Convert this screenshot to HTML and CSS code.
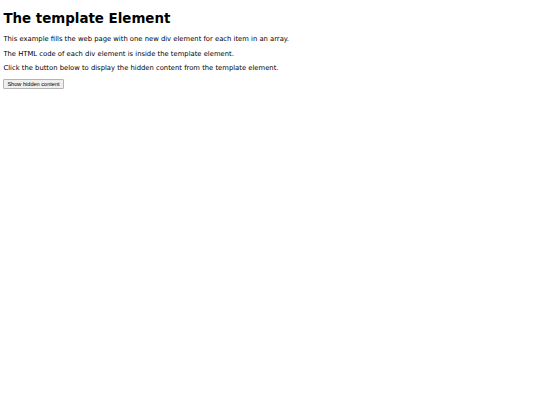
FILE: index.html
```html
<!DOCTYPE html>
<html lang="en">
<head>
    <meta charset="UTF-8">
    <meta name="viewport" content="width=device-width, initial-scale=1.0">
    <title>The template Element</title>
    <link rel="stylesheet" href="styles.css">
</head>
<body>

    <h1>The template Element</h1>

    <p>This example fills the web page with one new div element for each item in an array.</p>
    <p>The HTML code of each div element is inside the template element.</p>
    <p>Click the button below to display the hidden content from the template element.</p>

    <button onclick="showContent()">Show hidden content</button>

    <template>
        <div class="myClass">I like: </div>
    </template>

    <script>
        let myArr = ["Audi", "BMW", "Ford", "Honda", "Jaguar", "Nissan"];
        function showContent() {
            let temp, item, a, i;
            temp = document.getElementsByTagName("template")[0];
            item = temp.content.querySelector("div");
            for (i = 0; i < myArr.length; i++) {
                a = document.importNode(item, true);
                a.textContent += myArr[i];
                document.body.appendChild(a);
            }
        }
    </script>

</body>
</html>
```

FILE: styles.css
```css
body {
    margin: 3.4px;
    font-family: "DejaVu Sans", Verdana, sans-serif;
    font-size: 6.8px;
    color: #000;
}

h1 {
    font-size: 13.4px;
    margin: 8px 0 9px;
}

p {
    margin: 6.2px 0;
}

button {
    font-family: "Liberation Sans", Arial, sans-serif;
    font-size: 5.6px;
    padding: 1px 3px;
    margin-top: 1px;
    background-color: #efefef;
    border: 1px solid #b4b4b4;
    border-radius: 1px;
    color: #000;
}

.myClass {
    color: white;
    background-color: DodgerBlue;
    padding: 20px;
    text-align: center;
    margin: 10px 0;
}
```
